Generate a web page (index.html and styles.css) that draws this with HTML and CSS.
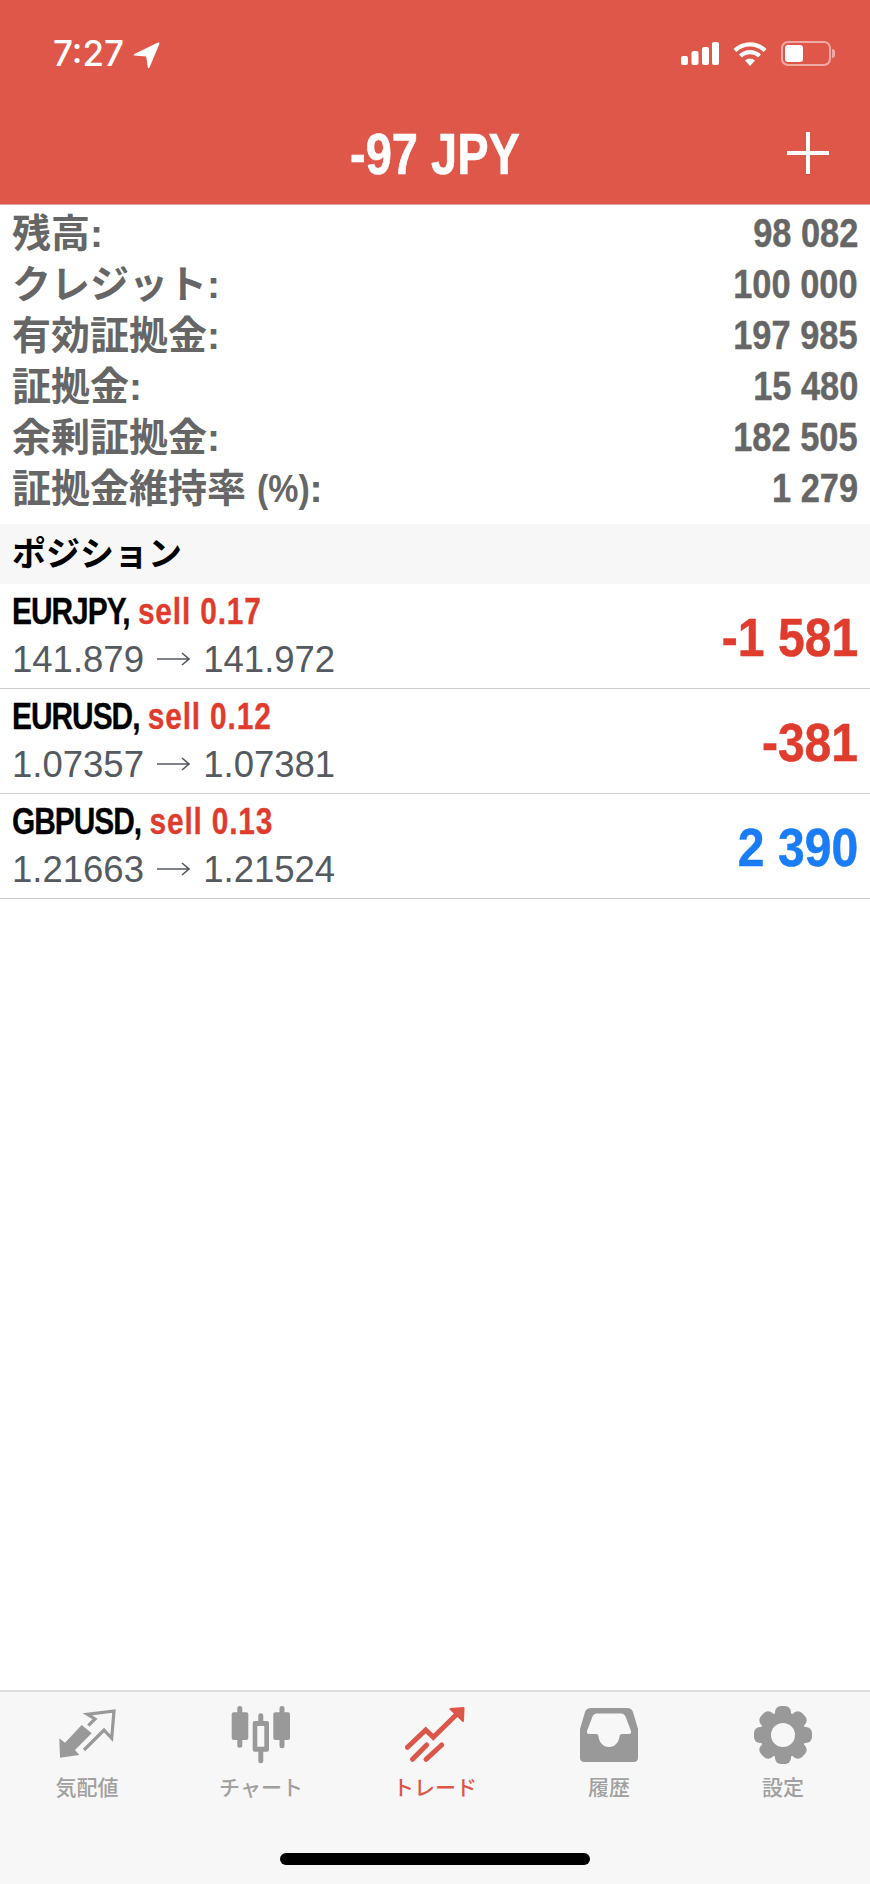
FILE: index.html
```html
<!DOCTYPE html>
<html>
<head>
  <title>Trade</title>
  <link rel="stylesheet" href="styles.css">
</head>
<body>
  <div class="app">
    <div class="top-bar">
      <div class="status-bar">
        <div class="status-time">
          <span>7:27</span>
          <svg class="location-icon" width="27" height="27" viewBox="0 0 27 27"><path d="M25 .6c1-.4 1.800.4 1.400 1.400L16.500 25.500c-.4 1-1.500 1-1.700 0l-1.600-11-11.500-.9c-1.100-.1-1.300-1.200-.3-1.700z" fill="#fff"/></svg>
        </div>
        <div class="status-icons">
          <svg class="signal-icon" width="38" height="23" viewBox="0 0 38 23" fill="#fff">
            <rect x="0" y="14" width="7" height="9" rx="2"/>
            <rect x="10.500" y="9" width="7" height="14" rx="2"/>
            <rect x="21" y="5" width="7" height="18" rx="2"/>
            <rect x="31" y="0" width="7" height="23" rx="2"/>
          </svg>
          <svg class="wifi-icon" width="34" height="24" viewBox="0 0 34 24" fill="none" stroke="#fff" stroke-width="4.200">
            <path d="M2 8.500a21.500 21.500 0 0 1 30 0"/>
            <path d="M7.500 14a13.500 13.500 0 0 1 19 0"/>
            <path d="M12 18.500a7.200 7.200 0 0 1 10 0L17 24z" fill="#fff" stroke="none"/>
          </svg>
          <div class="battery">
            <div class="battery-body"><div class="battery-level"></div></div>
            <div class="battery-cap"></div>
          </div>
        </div>
      </div>
      <div class="nav-bar">
        <h1 class="nav-title">-97 JPY</h1>
        <svg class="nav-add" width="42" height="42" viewBox="0 0 42 42"><path d="M21 0v42M0 21h42" stroke="#fff" stroke-width="4"/></svg>
      </div>
    </div>

    <div class="summary">
      <div class="summary-row"><span class="summary-label">残高:</span><span class="summary-value">98 082</span></div>
      <div class="summary-row"><span class="summary-label">クレジット:</span><span class="summary-value">100 000</span></div>
      <div class="summary-row"><span class="summary-label">有効証拠金:</span><span class="summary-value">197 985</span></div>
      <div class="summary-row"><span class="summary-label">証拠金:</span><span class="summary-value">15 480</span></div>
      <div class="summary-row"><span class="summary-label">余剰証拠金:</span><span class="summary-value">182 505</span></div>
      <div class="summary-row"><span class="summary-label">証拠金維持率 <span class="summary-unit">(%)</span>:</span><span class="summary-value">1 279</span></div>
    </div>

    <h2 class="section-heading">ポジション</h2>

    <div class="positions">
      <div class="position">
        <div class="position-info">
          <div class="position-title"><span class="symbol">EURJPY,</span> <span class="sell">sell 0.17</span></div>
          <div class="position-prices">141.879 <svg class="price-arrow" width="33" height="14" viewBox="0 0 33 14"><path d="M0 7h32M25 1l7 6-7 6" fill="none" stroke="#555a60" stroke-width="1.600"/></svg> 141.972</div>
        </div>
        <div class="position-profit loss">-1 581</div>
      </div>
      <div class="position">
        <div class="position-info">
          <div class="position-title"><span class="symbol">EURUSD,</span> <span class="sell">sell 0.12</span></div>
          <div class="position-prices">1.07357 <svg class="price-arrow" width="33" height="14" viewBox="0 0 33 14"><path d="M0 7h32M25 1l7 6-7 6" fill="none" stroke="#555a60" stroke-width="1.600"/></svg> 1.07381</div>
        </div>
        <div class="position-profit loss">-381</div>
      </div>
      <div class="position">
        <div class="position-info">
          <div class="position-title"><span class="symbol">GBPUSD,</span> <span class="sell">sell 0.13</span></div>
          <div class="position-prices">1.21663 <svg class="price-arrow" width="33" height="14" viewBox="0 0 33 14"><path d="M0 7h32M25 1l7 6-7 6" fill="none" stroke="#555a60" stroke-width="1.600"/></svg> 1.21524</div>
        </div>
        <div class="position-profit gain">2 390</div>
      </div>
    </div>

    <div class="tab-bar">
      <div class="tabs">
        <div class="tab">
          <svg width="60" height="58" viewBox="0 0 60 58">
            <path d="M2.300 32.300 3 51.700 22.300 49 18 44 34.700 27.300 24.700 19 8 36.700z" fill="#999"/>
            <path d="M31.300 19.700 38 13 30.300 8.300 57 5 54.700 32.300 47 24 27 44" fill="none" stroke="#999" stroke-width="3.200"/>
          </svg>
          <span class="tab-label">気配値</span>
        </div>
        <div class="tab">
          <svg width="60" height="58" viewBox="0 0 60 58" fill="#999">
            <rect x="6.300" y="0" width="5" height="41.700" rx="2.500"/>
            <rect x=".7" y="6.300" width="16.600" height="27.700" rx="2"/>
            <rect x="27.300" y="7.300" width="5" height="50" rx="2.500"/>
            <rect x="21.700" y="15" width="16.300" height="30.700" rx="2"/>
            <rect x="26.300" y="20" width="7" height="20.700" fill="#f7f7f7"/>
            <rect x="48.500" y="0" width="5" height="42.300" rx="2.500"/>
            <rect x="42.300" y="6.300" width="16.700" height="27.700" rx="2"/>
          </svg>
          <span class="tab-label">チャート</span>
        </div>
        <div class="tab active">
          <svg width="60" height="58" viewBox="0 0 60 58" fill="none" stroke="#dc5749" stroke-width="5" stroke-linecap="round">
            <path d="M2.500 41.300 20.700 24l7.600 7.300L53 7"/>
            <path d="M45.500 3 58.500 2 58 15z" fill="#dc5749" stroke-width="2" stroke-linejoin="round"/>
            <path d="M7.500 53.300 21.700 39M21 53.300 36.700 39"/>
          </svg>
          <span class="tab-label">トレード</span>
        </div>
        <div class="tab">
          <svg width="60" height="58" viewBox="0 0 60 58" fill="#999">
            <path fill-rule="evenodd" d="M12 2h36c3 0 5 1.500 6 4l5 17v29c0 2-1.500 4-4 4H5c-2.500 0-4-2-4-4V23L6 6c1-2.500 3-4 6-4zM18 7.500c-2 0-3.500 1-4.500 3L8 25c-.5 2 .5 3 2 3h7c1.500 0 2.500 1 2.500 2.500C20 36 24 41 30 41s10-5 10.500-10.500c0-1.500 1-2.500 2.500-2.500h7c1.500 0 2.500-1 2-3l-5.500-14.500c-1-2-2.500-3-4.500-3z"/>
          </svg>
          <span class="tab-label">履歴</span>
        </div>
        <div class="tab">
          <svg width="60" height="58" viewBox="-30 -29 60 58" fill="#999">
            <circle r="23"/>
            <rect x="-8" y="-29" width="16" height="58" rx="6"/>
            <rect x="-8" y="-29" width="16" height="58" rx="6" transform="rotate(45)"/>
            <rect x="-8" y="-29" width="16" height="58" rx="6" transform="rotate(90)"/>
            <rect x="-8" y="-29" width="16" height="58" rx="6" transform="rotate(135)"/>
            <circle r="12" fill="#f7f7f7"/>
          </svg>
          <span class="tab-label">設定</span>
        </div>
      </div>
      <div class="home-indicator"></div>
    </div>
  </div>
</body>
</html>
```

FILE: styles.css
```css
* {
  box-sizing: border-box;
}

body {
  margin: 0;
  background-color: #fff;
  font-family: "Liberation Sans", "Noto Sans CJK JP", sans-serif;
}

.app {
  width: 870px;
  height: 1884px;
  display: flex;
  flex-direction: column;
}

.top-bar {
  height: 205px;
  background-color: #df5749;
  border-bottom: 1px solid #d9a8a2;
}

.status-bar {
  height: 106px;
  display: flex;
  justify-content: space-between;
  align-items: flex-start;
  padding: 36px 35px 0 53px;
  color: #fff;
}

.status-time {
  display: flex;
  align-items: center;
  gap: 9px;
  font-family: Inter, sans-serif;
  font-size: 35px;
  font-weight: 500;
  line-height: 34px;
}

.location-icon {
  margin-top: 4px;
}

.status-icons {
  display: flex;
  align-items: center;
  gap: 14px;
  padding-top: 5px;
}

.battery {
  display: flex;
  align-items: center;
  gap: 1px;
}

.battery-body {
  width: 50px;
  height: 25px;
  border: 2px solid #f0aaa3;
  border-radius: 7px;
  padding: 2px;
}

.battery-level {
  width: 18px;
  height: 100%;
  background-color: #fff;
  border-radius: 3px;
}

.battery-cap {
  width: 3px;
  height: 9px;
  background-color: #f0aaa3;
  border-radius: 0 3px 3px 0;
}

.nav-bar {
  position: relative;
  height: 98px;
  display: flex;
  justify-content: center;
  align-items: center;
}

.nav-title {
  margin: 0;
  padding-bottom: 3px;
  font-size: 57px;
  font-weight: bold;
  color: #fff;
  transform: scaleX(0.825);
  -webkit-text-stroke: 0.6px #fff;
}

.nav-add {
  position: absolute;
  right: 41px;
  top: 26px;
}

.summary {
  height: 319px;
  padding: 3px 12px 0 12px;
}

.summary-row {
  height: 51px;
  display: flex;
  justify-content: space-between;
  align-items: center;
  color: #666;
  font-weight: bold;
}

.summary-label {
  padding-bottom: 1px;
  font-size: 39px;
  line-height: 51px;
}

/* no narrow font installed, so the latin text is squeezed */
.summary-unit {
  display: inline-block;
  margin-right: -8px;
  transform: scaleX(0.87);
  transform-origin: left;
}

.summary-value {
  font-size: 40px;
  transform: scaleX(0.86);
  transform-origin: right;
  -webkit-text-stroke: 0.4px #666;
}

.section-heading {
  margin: 0;
  height: 60px;
  padding: 0 12px;
  background-color: #f7f7f7;
  font-size: 34px;
  line-height: 60px;
  color: #000;
}

.position {
  height: 105px;
  display: flex;
  justify-content: space-between;
  align-items: center;
  padding: 0 12px;
  border-bottom: 1px solid #ccc;
}

.position-title {
  font-size: 36px;
  font-weight: bold;
  color: #000;
  line-height: 48px;
  transform: scaleX(0.83);
  transform-origin: left;
  -webkit-text-stroke: 0.3px;
}

.symbol {
  letter-spacing: -1.2px;
}

.sell {
  color: #e03c2e;
  letter-spacing: 1px;
}

.position-prices {
  font-size: 36.5px;
  color: #555a60;
  line-height: 48px;
}

.price-arrow {
  margin: 0 3px;
  vertical-align: 6px;
}

.position-profit {
  padding-top: 1px;
  font-size: 54px;
  font-weight: bold;
  transform: scaleX(0.89);
  transform-origin: right;
  -webkit-text-stroke: 0.5px;
}

.loss {
  color: #e03c2e;
}

.gain {
  color: #1a7cf6;
}

.tab-bar {
  margin-top: auto;
  height: 194px;
  background-color: #f7f7f7;
  border-top: 2px solid #ddd;
  display: flex;
  flex-direction: column;
}

.tabs {
  display: flex;
  padding-top: 14px;
}

.tab {
  flex: 1;
  height: 96px;
  display: flex;
  flex-direction: column;
  align-items: center;
  justify-content: space-between;
  color: #a0a0a0;
}

.tab.active {
  color: #dc5749;
}

.tab-label {
  font-size: 21px;
  font-weight: 500;
  line-height: 28px;
}

.home-indicator {
  width: 310px;
  height: 12px;
  margin: 51px auto 0;
  background-color: #000;
  border-radius: 6px;
}
```
